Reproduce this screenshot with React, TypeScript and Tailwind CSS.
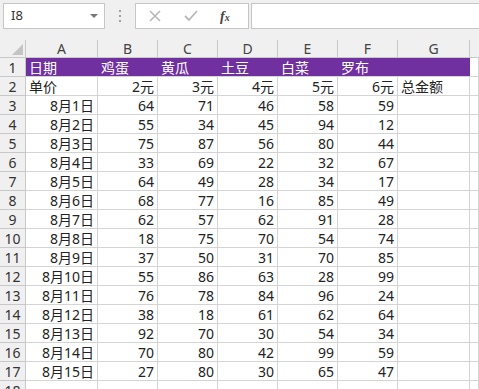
import React from "react";

const cols = ["A", "B", "C", "D", "E", "F", "G"];

const rows: (string | number)[][] = [
  ["8月1日", 64, 71, 46, 58, 59],
  ["8月2日", 55, 34, 45, 94, 12],
  ["8月3日", 75, 87, 56, 80, 44],
  ["8月4日", 33, 69, 22, 32, 67],
  ["8月5日", 64, 49, 28, 34, 17],
  ["8月6日", 68, 77, 16, 85, 49],
  ["8月7日", 62, 57, 62, 91, 28],
  ["8月8日", 18, 75, 70, 54, 74],
  ["8月9日", 37, 50, 31, 70, 85],
  ["8月10日", 55, 86, 63, 28, 99],
  ["8月11日", 76, 78, 84, 96, 24],
  ["8月12日", 38, 18, 61, 62, 64],
  ["8月13日", 92, 70, 30, 54, 34],
  ["8月14日", 70, 80, 42, 99, 59],
  ["8月15日", 27, 80, 30, 65, 47],
];

const grid =
  "grid grid-cols-[26px_72px_60px_60px_60px_60px_60px_72px_1fr]";
const cell = "h-[19px] border-r border-b border-[#d4d4d4] px-[3px] leading-[19px] whitespace-nowrap";
const rowHead =
  "h-[19px] border-r border-b border-[#c8c8c8] bg-[#f0f0f0] text-center leading-[19px] text-[#333]";

export default function App() {
  return (
    <div
      className="h-[389px] w-[479px] overflow-hidden bg-white text-[14px] text-[#222]"
      style={{ fontFamily: '"Noto Sans", "Noto Sans CJK SC", sans-serif' }}
    >
      {/* formula bar */}
      <div className="flex h-[40px] items-start bg-[#f0f0f0] pt-[3px]">
        <div className="ml-[3px] flex h-[26px] w-[102px] items-center justify-between border border-[#c6c6c6] bg-white pl-[7px] pr-[6px] text-[13px] text-[#333]">
          <span>I8</span>
          <span className="h-0 w-0 border-x-[4px] border-t-[4px] border-x-transparent border-t-[#777]" />
        </div>
        <div className="flex w-[30px] flex-col items-center justify-center gap-[3px] pt-[7px]">
          <span className="h-[2px] w-[2px] bg-[#a0a0a0]" />
          <span className="h-[2px] w-[2px] bg-[#a0a0a0]" />
          <span className="h-[2px] w-[2px] bg-[#a0a0a0]" />
        </div>
        <div className="flex h-[26px] w-[114px] items-center border border-[#c6c6c6] bg-white">
          <svg width="12" height="12" viewBox="0 0 12 12" className="ml-[13px]">
            <path d="M1 1 L11 11 M11 1 L1 11" stroke="#b8b8b8" strokeWidth="1.6" />
          </svg>
          <svg width="14" height="12" viewBox="0 0 14 12" className="ml-[23px]">
            <path d="M1 6 L5 10 L13 1" stroke="#b8b8b8" strokeWidth="1.8" fill="none" />
          </svg>
          <span
            className="ml-[22px] text-[14px] font-bold italic text-[#444]"
            style={{ fontFamily: '"Liberation Serif", serif' }}
          >
            f<span className="text-[10px]">x</span>
          </span>
        </div>
        <div className="ml-[2px] h-[26px] flex-1 border border-r-0 border-[#c6c6c6] bg-white" />
      </div>

      {/* column headers */}
      <div className={grid}>
        <div className="flex h-[18px] items-end justify-end border-r border-b border-[#c8c8c8] bg-[#f0f0f0] pb-[2px] pr-[2px]">
          <svg width="11" height="11" viewBox="0 0 11 11">
            <path d="M11 0 L11 11 L0 11 Z" fill="#c4c4c4" />
          </svg>
        </div>
        {cols.map((c) => (
          <div
            key={c}
            className="h-[18px] border-r border-b border-[#c8c8c8] bg-[#f0f0f0] text-center leading-[18px] text-[#444]"
          >
            {c}
          </div>
        ))}
        <div className="h-[18px] border-b border-[#c8c8c8] bg-[#f0f0f0]" />
      </div>

      {/* row 1 */}
      <div className={grid}>
        <div className={rowHead}>1</div>
        {["日期", "鸡蛋", "黄瓜", "土豆", "白菜", "罗布", ""].map((t, i) => (
          <div
            key={i}
            className="h-[19px] border-b border-[#d4d4d4] bg-[#7030a0] px-[3px] leading-[19px] text-white"
          >
            {t}
          </div>
        ))}
        <div className={cell} />
      </div>

      {/* row 2 */}
      <div className={grid}>
        <div className={rowHead}>2</div>
        <div className={cell}>单价</div>
        {["2元", "3元", "4元", "5元", "6元"].map((t) => (
          <div key={t} className={`${cell} text-right`}>
            {t}
          </div>
        ))}
        <div className={cell}>总金额</div>
        <div className={cell} />
      </div>

      {rows.map((r, ri) => (
        <div key={ri} className={grid}>
          <div className={rowHead}>{ri + 3}</div>
          {r.map((v, i) => (
            <div key={i} className={`${cell} text-right`}>
              {v}
            </div>
          ))}
          <div className={cell} />
          <div className={cell} />
        </div>
      ))}

      <div className={grid}>
        <div className={rowHead}>18</div>
        {cols.map((c) => (
          <div key={c} className={cell} />
        ))}
        <div className={cell} />
      </div>
    </div>
  );
}
